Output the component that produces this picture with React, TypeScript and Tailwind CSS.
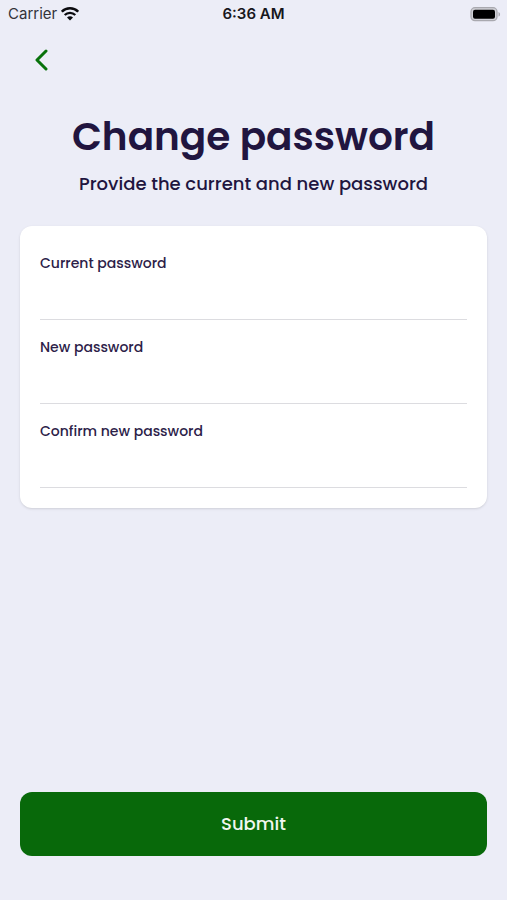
const fields = [
  { id: "current-password", label: "Current password", complete: "current-password" },
  { id: "new-password", label: "New password", complete: "new-password" },
  { id: "confirm-password", label: "Confirm new password", complete: "new-password" },
];

function WifiIcon() {
  return (
    <svg width="18" height="14" viewBox="0 0 18 14" fill="none" stroke="#0b0b0f" aria-hidden="true">
      <path d="M.8 4.700C5.300 .1 12.700 .1 17.200 4.700" strokeWidth="2.500" />
      <path d="M3.700 8C6.700 5.100 11.300 5.100 14.300 8" strokeWidth="2.300" />
      <path d="M9 13.400L6 10.400C7.700 8.800 10.300 8.800 12 10.400Z" fill="#0b0b0f" stroke="none" />
    </svg>
  );
}

function BatteryIcon() {
  return (
    <svg width="31" height="15" viewBox="0 0 31 15" aria-hidden="true">
      <rect x="1" y=".7" width="26" height="13" rx="4" fill="#d0d0d6" stroke="#a9a9af" strokeWidth="1.300" />
      <rect x="3" y="2.700" width="22" height="9" rx="2" fill="#000" />
      <path d="M28.500 5C30.600 5.800 30.600 8.800 28.500 9.600Z" fill="#a9a9af" />
    </svg>
  );
}

function StatusBar() {
  return (
    <div className="grid h-7 grid-cols-3 items-center px-2 font-['Inter',sans-serif] text-[15px] leading-5 text-[#17171c]">
      <div className="flex items-center gap-1">
        <span className="text-[#33333a]">Carrier</span>
        <WifiIcon />
      </div>
      <span className="text-center font-semibold">6:36 AM</span>
      <div className="-mr-0.5 flex justify-end">
        <BatteryIcon />
      </div>
    </div>
  );
}

export default function App() {
  return (
    <div className="flex min-h-screen flex-col bg-[#ecedf7] font-['Poppins','Inter',sans-serif] text-[#21153f]">
      <StatusBar />
      <header className="px-5 pt-3">
        <button type="button" aria-label="Back" className="flex size-10 items-center justify-center">
          <svg width="16" height="24" viewBox="0 0 16 24" fill="none" stroke="#08720b" strokeWidth="3" strokeLinecap="round" strokeLinejoin="round" aria-hidden="true">
            <path d="M14 3L5 12L14 21" />
          </svg>
        </button>
      </header>
      <form className="flex flex-1 flex-col px-5 pb-11" onSubmit={(e) => e.preventDefault()}>
        <h1 className="mt-[33px] text-center text-[39px] leading-12 font-semibold">Change password</h1>
        <p className="mt-[11px] text-center text-[18px] leading-6 font-medium">Provide the current and new password</p>
        <div className="mt-[30px] rounded-xl bg-white px-5 pt-2.5 pb-5 shadow-sm">
          {fields.map((f) => (
            <div key={f.id} className="flex flex-col pt-4">
              <label htmlFor={f.id} className="text-[14px] leading-[22px] font-medium text-[#2c2148]">
                {f.label}
              </label>
              <input
                id={f.id}
                type="password"
                autoComplete={f.complete}
                className="h-[46px] w-full border-b border-[#dcdce0] bg-transparent text-base outline-none"
              />
            </div>
          ))}
        </div>
        <button type="submit" className="mt-auto h-16 rounded-xl bg-[#08690a] text-[18px] leading-6 font-medium text-[#f0f7f0]">
          Submit
        </button>
      </form>
    </div>
  );
}
